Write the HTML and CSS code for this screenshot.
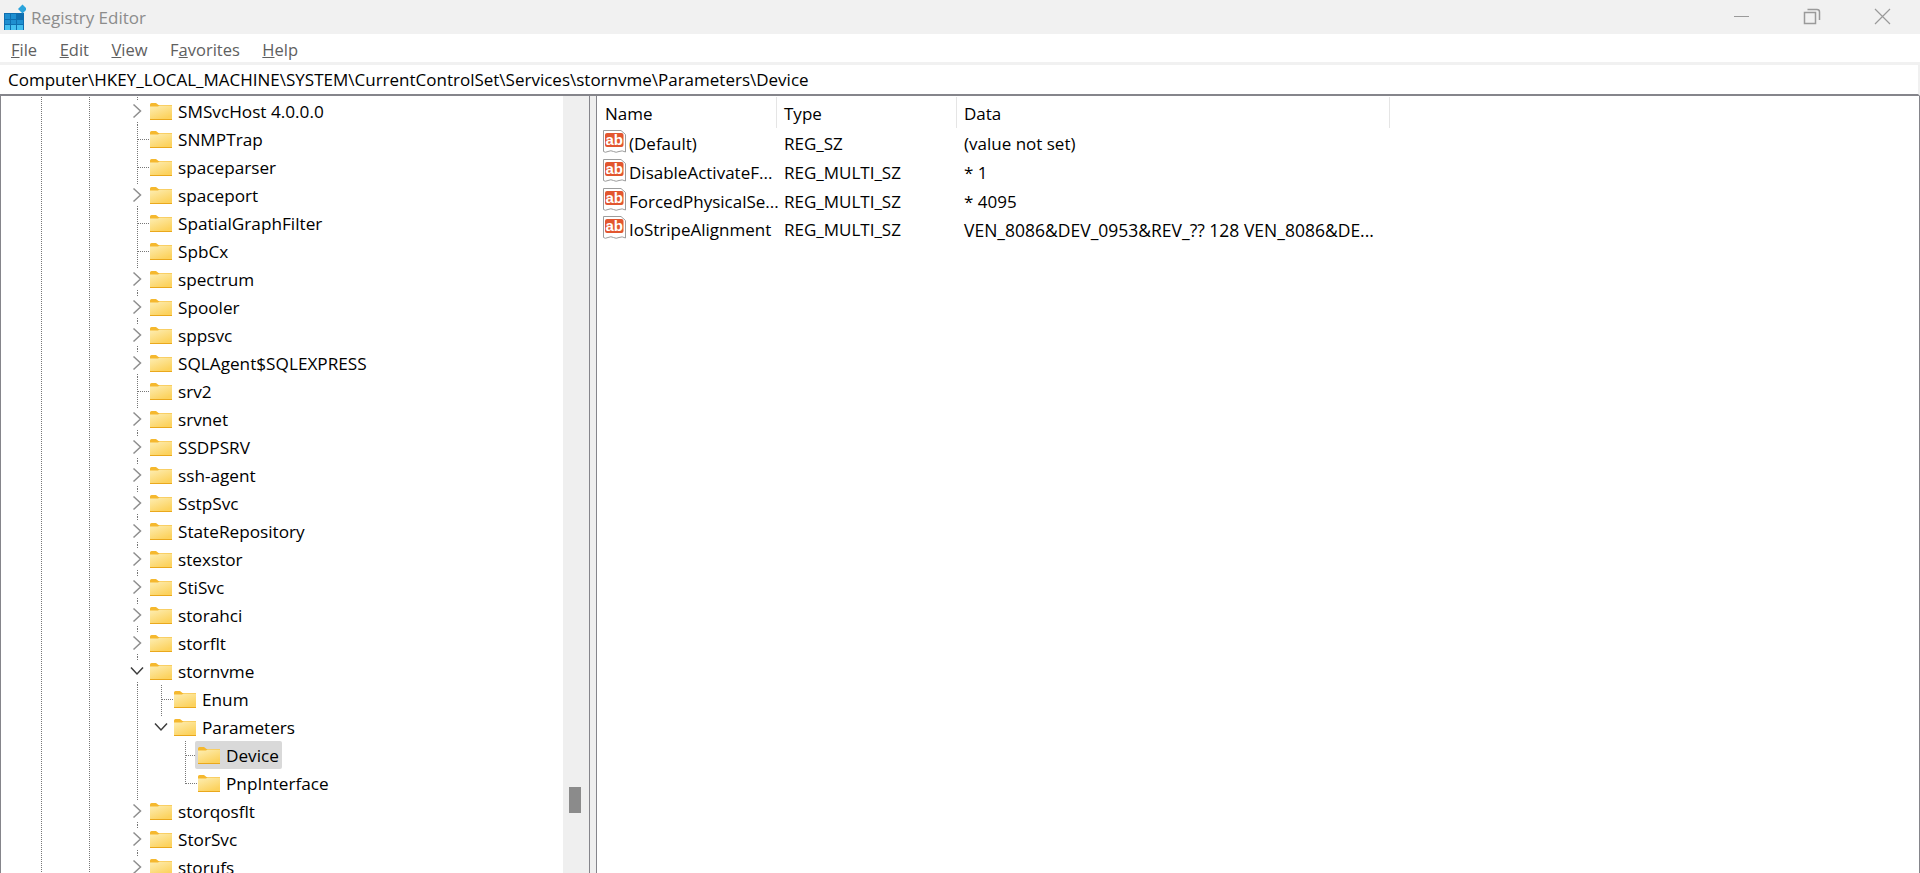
FILE: index.html
```html
<!DOCTYPE html>
<html lang="en">
<head>
    <meta charset="UTF-8">
    <title>Registry Editor</title>
    <link rel="stylesheet" href="styles.css">
</head>

<body>
    <svg class="sprites" width="0" height="0">
        <defs>
            <linearGradient id="folderFill" x1="0" y1="0" x2="0.6" y2="1">
                <stop offset="0" stop-color="#fdeeb4"/>
                <stop offset="1" stop-color="#fcd25e"/>
            </linearGradient>
            <symbol id="folder" viewBox="0 0 22 17">
                <path d="M0 1.5Q0 0 1.5 0H6L8.500 2H22V17H0Z" fill="#f5b82e"/>
                <path d="M0 3.500H8L9.500 2.500H22V16H0Z" fill="url(#folderFill)"/>
                <path d="M0 16H22V17H0Z" fill="#eaa81c"/>
            </symbol>
            <symbol id="chevRight" viewBox="0 0 10 16">
                <path d="M1.500 1.500L8.500 8L1.500 14.500" fill="none" stroke="#8e8e8e" stroke-width="1.500"/>
            </symbol>
            <symbol id="chevDown" viewBox="0 0 14 10">
                <path d="M1 1.500L7 8L13 1.500" fill="none" stroke="#3c3c3c" stroke-width="1.500"/>
            </symbol>
            <symbol id="strVal" viewBox="0 0 23 23">
                <path d="M0.500 0.500H18L22.500 4.500V22Q19 20 16 21.500T10.500 21.500T5 21.500T0.500 21.500Z" fill="#fff" stroke="#9c9c9c"/>
                <rect x="2" y="3" width="18.500" height="14" rx="2" fill="#e2562f"/>
                <text class="ab-text" x="11.200" y="14.500">ab</text>
            </symbol>
        </defs>
    </svg>

    <header class="titlebar">
        <svg class="app-icon" width="24" height="26" viewBox="0 0 24 26">
            <rect x="2" y="9" width="20" height="20" fill="#0f6fb0"/>
            <g fill="#1f8fd0">
                <rect x="3" y="10" width="5" height="5"/><rect x="9" y="10" width="5" height="5"/>
                <rect x="3" y="16" width="5" height="4"/><rect x="9" y="16" width="5" height="4"/><rect x="15" y="16" width="6" height="4"/>
            </g>
            <g fill="#45c0f0">
                <rect x="3" y="21" width="5" height="5"/><rect x="9" y="21" width="5" height="5"/><rect x="15" y="21" width="6" height="5"/>
            </g>
            <path d="M20.500 0.500L25 5L20.500 9.500L16 5Z" fill="#2ba4dc"/>
        </svg>
        <span class="app-title">Registry Editor</span>
        <div class="win-controls">
            <svg class="win-btn" width="72" height="34" viewBox="0 0 72 34"><path d="M28 16.500H43" stroke="#9a9a9a" stroke-width="1"/></svg>
            <svg class="win-btn" width="70" height="34" viewBox="0 0 70 34"><path d="M26.500 12.500H37.500V23.500H26.500ZM29.500 9.500H39Q41.500 9.500 41.500 12V20" fill="none" stroke="#9a9a9a" stroke-width="1.500"/></svg>
            <svg class="win-btn" width="71" height="34" viewBox="0 0 71 34"><path d="M27 9L42 24M42 9L27 24" stroke="#9a9a9a" stroke-width="1.200"/></svg>
        </div>
    </header>

    <nav class="menubar">
        <span class="menu-item"><u>F</u>ile</span>
        <span class="menu-item"><u>E</u>dit</span>
        <span class="menu-item"><u>V</u>iew</span>
        <span class="menu-item">F<u>a</u>vorites</span>
        <span class="menu-item"><u>H</u>elp</span>
    </nav>

    <div class="address">Computer\HKEY_LOCAL_MACHINE\SYSTEM\CurrentControlSet\Services\stornvme\Parameters\Device</div>

    <main class="panes">
        <section class="tree-pane">
            <div class="tree">
                <div class="row closed"><span class="twisty"><svg width="10" height="16"><use href="#chevRight"/></svg></span><span class="node"><svg class="folder"><use href="#folder"/></svg>SMSvcHost 4.0.0.0</span></div>
                <div class="row leaf"><span class="twisty"></span><span class="node"><svg class="folder"><use href="#folder"/></svg>SNMPTrap</span></div>
                <div class="row leaf"><span class="twisty"></span><span class="node"><svg class="folder"><use href="#folder"/></svg>spaceparser</span></div>
                <div class="row closed"><span class="twisty"><svg width="10" height="16"><use href="#chevRight"/></svg></span><span class="node"><svg class="folder"><use href="#folder"/></svg>spaceport</span></div>
                <div class="row leaf"><span class="twisty"></span><span class="node"><svg class="folder"><use href="#folder"/></svg>SpatialGraphFilter</span></div>
                <div class="row leaf"><span class="twisty"></span><span class="node"><svg class="folder"><use href="#folder"/></svg>SpbCx</span></div>
                <div class="row closed"><span class="twisty"><svg width="10" height="16"><use href="#chevRight"/></svg></span><span class="node"><svg class="folder"><use href="#folder"/></svg>spectrum</span></div>
                <div class="row closed"><span class="twisty"><svg width="10" height="16"><use href="#chevRight"/></svg></span><span class="node"><svg class="folder"><use href="#folder"/></svg>Spooler</span></div>
                <div class="row closed"><span class="twisty"><svg width="10" height="16"><use href="#chevRight"/></svg></span><span class="node"><svg class="folder"><use href="#folder"/></svg>sppsvc</span></div>
                <div class="row closed"><span class="twisty"><svg width="10" height="16"><use href="#chevRight"/></svg></span><span class="node"><svg class="folder"><use href="#folder"/></svg>SQLAgent$SQLEXPRESS</span></div>
                <div class="row leaf"><span class="twisty"></span><span class="node"><svg class="folder"><use href="#folder"/></svg>srv2</span></div>
                <div class="row closed"><span class="twisty"><svg width="10" height="16"><use href="#chevRight"/></svg></span><span class="node"><svg class="folder"><use href="#folder"/></svg>srvnet</span></div>
                <div class="row closed"><span class="twisty"><svg width="10" height="16"><use href="#chevRight"/></svg></span><span class="node"><svg class="folder"><use href="#folder"/></svg>SSDPSRV</span></div>
                <div class="row closed"><span class="twisty"><svg width="10" height="16"><use href="#chevRight"/></svg></span><span class="node"><svg class="folder"><use href="#folder"/></svg>ssh-agent</span></div>
                <div class="row closed"><span class="twisty"><svg width="10" height="16"><use href="#chevRight"/></svg></span><span class="node"><svg class="folder"><use href="#folder"/></svg>SstpSvc</span></div>
                <div class="row closed"><span class="twisty"><svg width="10" height="16"><use href="#chevRight"/></svg></span><span class="node"><svg class="folder"><use href="#folder"/></svg>StateRepository</span></div>
                <div class="row closed"><span class="twisty"><svg width="10" height="16"><use href="#chevRight"/></svg></span><span class="node"><svg class="folder"><use href="#folder"/></svg>stexstor</span></div>
                <div class="row closed"><span class="twisty"><svg width="10" height="16"><use href="#chevRight"/></svg></span><span class="node"><svg class="folder"><use href="#folder"/></svg>StiSvc</span></div>
                <div class="row closed"><span class="twisty"><svg width="10" height="16"><use href="#chevRight"/></svg></span><span class="node"><svg class="folder"><use href="#folder"/></svg>storahci</span></div>
                <div class="row closed"><span class="twisty"><svg width="10" height="16"><use href="#chevRight"/></svg></span><span class="node"><svg class="folder"><use href="#folder"/></svg>storflt</span></div>
                <div class="row closed"><span class="twisty"><svg width="14" height="10"><use href="#chevDown"/></svg></span><span class="node"><svg class="folder"><use href="#folder"/></svg>stornvme</span></div>
                <div class="row leaf sub"><span class="twisty"></span><span class="node"><svg class="folder"><use href="#folder"/></svg>Enum</span></div>
                <div class="row closed sub first-open"><span class="twisty"><svg width="14" height="10"><use href="#chevDown"/></svg></span><span class="node"><svg class="folder"><use href="#folder"/></svg>Parameters</span></div>
                <div class="row leaf sub2"><span class="twisty"></span><span class="node selected"><svg class="folder"><use href="#folder"/></svg>Device</span></div>
                <div class="row leaf sub2 last"><span class="twisty"></span><span class="node"><svg class="folder"><use href="#folder"/></svg>PnpInterface</span></div>
                <div class="row closed"><span class="twisty"><svg width="10" height="16"><use href="#chevRight"/></svg></span><span class="node"><svg class="folder"><use href="#folder"/></svg>storqosflt</span></div>
                <div class="row closed"><span class="twisty"><svg width="10" height="16"><use href="#chevRight"/></svg></span><span class="node"><svg class="folder"><use href="#folder"/></svg>StorSvc</span></div>
                <div class="row closed"><span class="twisty"><svg width="10" height="16"><use href="#chevRight"/></svg></span><span class="node"><svg class="folder"><use href="#folder"/></svg>storufs</span></div>
            </div>
            <div class="scrollbar"><div class="thumb"></div></div>
        </section>

        <div class="splitter"></div>

        <section class="list-pane">
            <div class="list-head">
                <span class="col col-name">Name</span>
                <span class="col col-type">Type</span>
                <span class="col col-data">Data</span>
            </div>
            <div class="list-row">
                <span class="col-name cell-name"><svg class="val-icon"><use href="#strVal"/></svg>(Default)</span>
                <span class="col-type">REG_SZ</span>
                <span class="col-data">(value not set)</span>
            </div>
            <div class="list-row">
                <span class="col-name cell-name"><svg class="val-icon"><use href="#strVal"/></svg>DisableActivateF...</span>
                <span class="col-type">REG_MULTI_SZ</span>
                <span class="col-data">* 1</span>
            </div>
            <div class="list-row">
                <span class="col-name cell-name"><svg class="val-icon"><use href="#strVal"/></svg>ForcedPhysicalSe...</span>
                <span class="col-type">REG_MULTI_SZ</span>
                <span class="col-data">* 4095</span>
            </div>
            <div class="list-row">
                <span class="col-name cell-name"><svg class="val-icon"><use href="#strVal"/></svg>IoStripeAlignment</span>
                <span class="col-type">REG_MULTI_SZ</span>
                <span class="col-data data-long">VEN_8086&amp;DEV_0953&amp;REV_?? 128 VEN_8086&amp;DE...</span>
            </div>
        </section>
    </main>
</body>
</html>
```

FILE: styles.css
```css
:root {
    --bar-bg: #f1f1f1;
    --pane-line: #85858b;
    --guide: repeating-linear-gradient(to bottom, #777 0 1px, transparent 1px 2px);
}

html, body {
    margin: 0;
    height: 100%;
    overflow: hidden;
}

body {
    display: flex;
    flex-direction: column;
    background: #fff;
    color: #000;
    font-family: "Open Sans", "Noto Sans", sans-serif;
    font-size: 17px;
}

.sprites {
    position: absolute;
}

.ab-text {
    fill: #fff;
    font-family: "Liberation Sans", sans-serif;
    font-size: 15px;
    font-weight: 700;
    text-anchor: middle;
}

/* Title bar */
.titlebar {
    display: flex;
    align-items: center;
    flex: 0 0 34px;
    padding-left: 2px;
    background: var(--bar-bg);
}

.app-icon {
    flex: none;
    align-self: flex-start;
    margin-top: 4px;
    overflow: hidden;
}

.app-title {
    margin-left: 5px;
    color: #8c8c8c;
}

.win-controls {
    display: flex;
    margin-left: auto;
    padding-right: 1px;
}

.win-btn {
    display: block;
}

/* Menu */
.menubar {
    display: flex;
    align-items: center;
    flex: 0 0 28px;
    box-sizing: border-box;
    padding: 2px 0 0 11px;
    color: #606060;
    font-size: 16.500px;
}

.menu-item {
    margin-right: 22.500px;
}

/* Address bar */
.address {
    flex: 0 0 31px;
    box-sizing: border-box;
    margin-top: 3px;
    padding: 2px 0 0 8px;
    border-right: 2px solid #f0f0f0;
    border-bottom: 2px solid var(--pane-line);
    line-height: 25px;
    box-shadow: 0 -3px 0 var(--bar-bg);
    white-space: nowrap;
}

/* Panes */
.panes {
    display: flex;
    flex: 1;
    min-height: 0;
    border-left: 1px solid var(--pane-line);
    border-right: 1px solid var(--pane-line);
}

.tree-pane {
    display: flex;
    flex: 0 0 588px;
    border-right: 1px solid var(--pane-line);
    overflow: hidden;
    font-size: 17.200px;
}

.tree {
    flex: 1;
    padding-top: 1px;
}

.row {
    display: flex;
    align-items: center;
    height: 28px;
    padding-left: 124px;
    background-image: var(--guide), var(--guide);
    background-size: 1px 100%;
    background-position: 40px 0, 88px 0;
    background-repeat: no-repeat;
    white-space: nowrap;
}

.twisty {
    display: flex;
    align-items: center;
    justify-content: center;
    flex: 0 0 24px;
    height: 100%;
    background-repeat: no-repeat;
}

.closed .twisty {
    background-image: var(--guide), var(--guide);
    background-size: 1px 3px;
    background-position: 12px 0, 12px 100%;
}

.leaf .twisty {
    background-image: var(--guide), repeating-linear-gradient(to right, #777 0 1px, transparent 1px 2px);
    background-size: 1px 100%, 12px 1px;
    background-position: 12px 0, 13px 14px;
}

.sub, .sub2 {
    background-image: var(--guide), var(--guide), var(--guide);
    background-size: 1px 100%;
    background-position: 40px 0, 88px 0, 136px 0;
}

.sub {
    padding-left: 148px;
}

.sub2 {
    padding-left: 172px;
}

.last .twisty {
    background-size: 1px 15px, 12px 1px;
}

.first-open .twisty {
    background-size: 1px 3px, 0 0;
}

.node {
    display: flex;
    align-items: center;
    height: 28px;
    margin-left: 1px;
}

.folder {
    flex: none;
    width: 22px;
    height: 17px;
    margin-right: 6px;
}

.node.selected {
    box-sizing: border-box;
    margin-left: -2px;
    padding: 0 3px;
    background: #d9d9d9;
    border-radius: 2px;
}

.scrollbar {
    flex: 0 0 26px;
    box-sizing: border-box;
    padding-top: 691px;
    background: #efefef;
}

.thumb {
    width: 12px;
    height: 26px;
    margin-left: 6px;
    background: #8b8b8b;
}

.splitter {
    flex: 0 0 6px;
    background: #efefef;
}

/* List */
.list-pane {
    flex: 1;
    border-left: 1px solid var(--pane-line);
    padding-top: 1px;
    white-space: nowrap;
}

.list-head, .list-row {
    display: flex;
    align-items: center;
}

.list-head {
    height: 31px;
    margin-bottom: 1.500px;
}

.list-row {
    height: 28.670px;
}

.col {
    box-sizing: border-box;
    height: 100%;
    line-height: 33px;
    border-right: 1px solid #e5e5e5;
}

.col-name, .col-type, .col-data {
    box-sizing: border-box;
    padding-left: 8px;
}

.col-name, .col-type {
    flex: 0 0 180px;
}

.col-data {
    flex: 0 0 433px;
}

.col-type {
    padding-left: 7px;
}

.col-data {
    padding-left: 7px;
}

.data-long {
    font-size: 17.500px;
}

.cell-name {
    display: flex;
    align-items: center;
    min-width: 0;
    padding-left: 6px;
}

.val-icon {
    flex: none;
    width: 23px;
    height: 23px;
    margin: 0 3px 4px 0;
}
```
